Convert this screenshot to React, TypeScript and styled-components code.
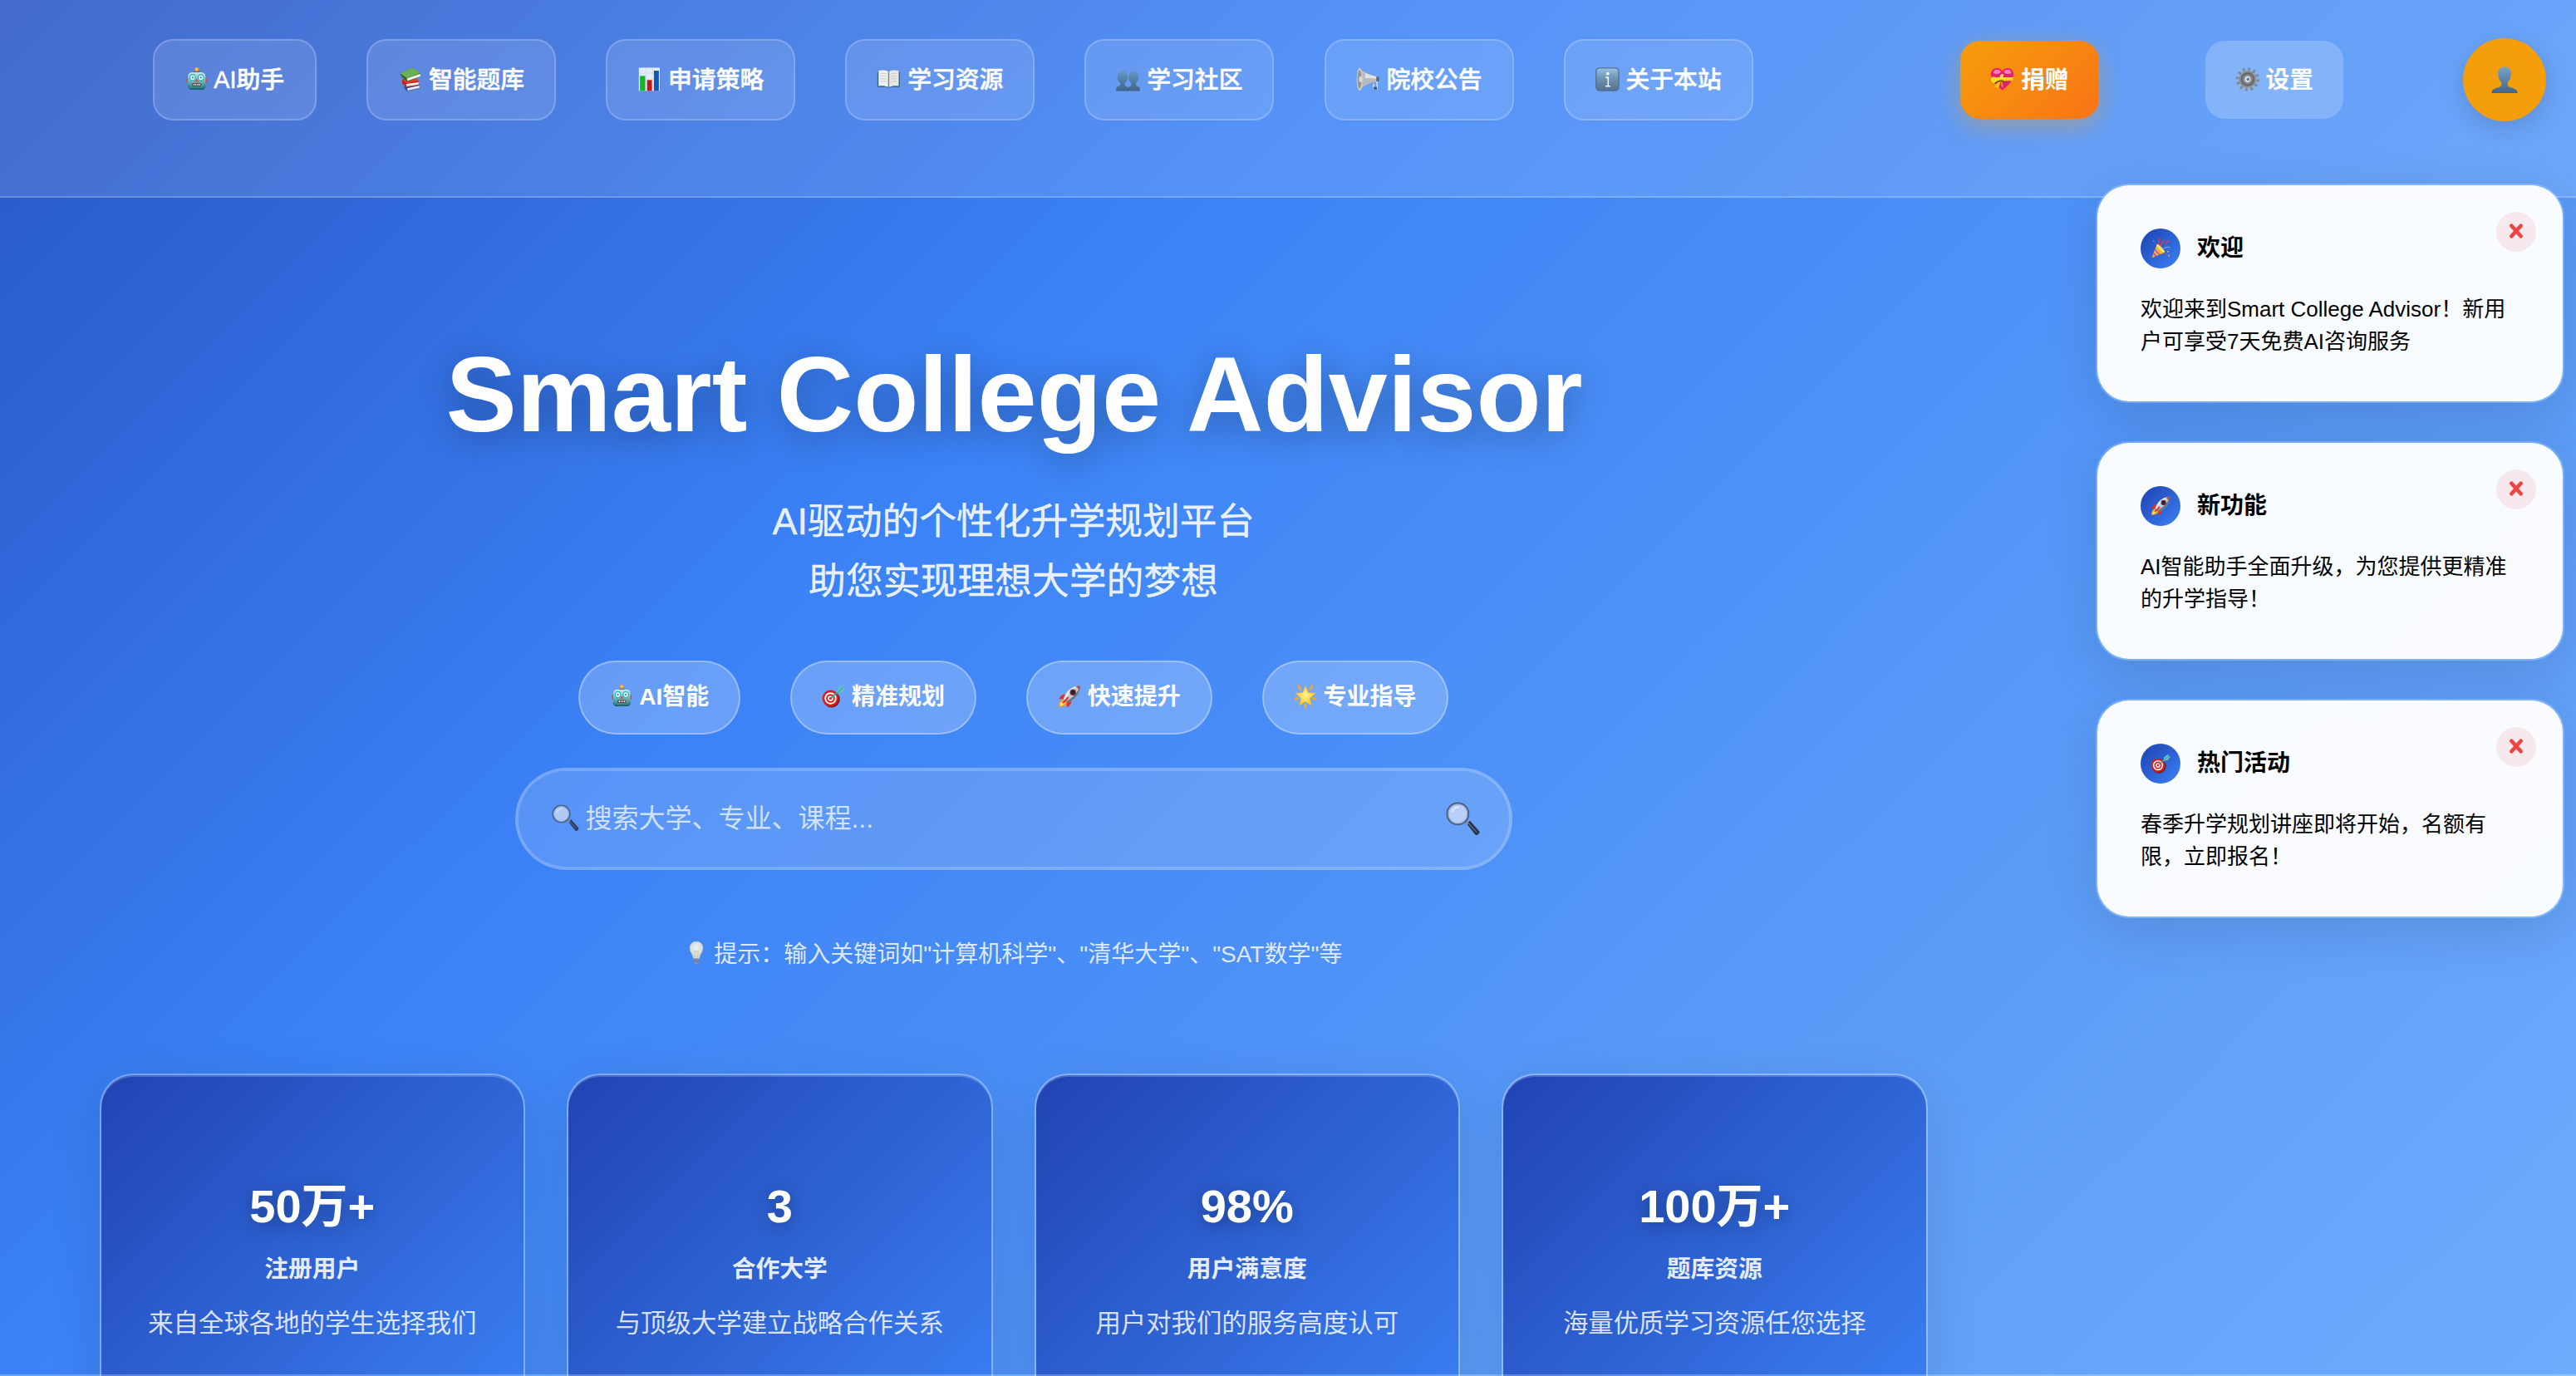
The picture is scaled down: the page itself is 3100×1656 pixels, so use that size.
import React from 'react';
import styled, { createGlobalStyle } from 'styled-components';

const GlobalStyle = createGlobalStyle`
  * { box-sizing: border-box; }
  body {
    margin: 0;
    font-family: "Liberation Sans", "Noto Sans CJK SC", sans-serif;
    color: #fff;
  }
`;

/* ---------- Emoji drawings ---------- */

const EmojiSvg = styled.svg`
  display: inline-block;
  width: 1em;
  height: 1em;
  vertical-align: -0.13em;
  overflow: visible;
`;

const drawings: Record<string, React.ReactNode> = {
  robot: (
    <g transform="translate(2.300 .4) scale(.88 .95)">
      <defs>
        <linearGradient id="robotHead" x1="0" y1="0" x2="0" y2="1">
          <stop offset="0" stopColor="#c4ebe4" />
          <stop offset=".5" stopColor="#74b5b4" />
          <stop offset="1" stopColor="#1f7379" />
        </linearGradient>
      </defs>
      <path d="M12.500 5h7l1.500 3h-10z" fill="#4f5380" />
      <circle cx="16" cy="2.600" r="3" fill="#f5a623" />
      <circle cx="15.400" cy="1.800" r="1.100" fill="#ffd97a" />
      <rect x=".6" y="14" width="30.800" height="7.500" rx="1.800" fill="#d8473b" />
      <rect x="2.600" y="6.500" width="26.800" height="24.500" rx="6" fill="url(#robotHead)" />
      <path d="M2.600 24c1 4.500 3 5.500 6 5.500h14.800c3 0 5-1 6-5.500v1c0 4-2.700 6-6 6H8.600c-3.300 0-6-2-6-6z" fill="#155a60" />
      <circle cx="9.800" cy="14" r="4.200" fill="#f4feff" stroke="#2fb3c9" strokeWidth="1.600" />
      <circle cx="22.200" cy="14" r="4.200" fill="#f4feff" stroke="#2fb3c9" strokeWidth="1.600" />
      <circle cx="9.800" cy="14" r="1.400" fill="#1e93b5" />
      <circle cx="22.200" cy="14" r="1.400" fill="#1e93b5" />
      <path d="M16 15.500l2.600 4.300h-5.200z" fill="#e0402f" />
      <rect x="9.500" y="21.800" width="13" height="4.200" rx="1.600" fill="#41302f" />
      <path d="M11 23.900h2M14 23.900h1.600M16.800 23.900h1.600M19.400 23.900h1.800" stroke="#fff" strokeWidth="2.200" />
    </g>
  ),
  books: (
    <>
      <path d="M8 26l4-3.500 14-1 3 2.500v4l-16.500 4L9 29.500z" fill="#3b4f9f" />
      <path d="M12.500 28l16-3.500.3 3-16 3.700z" fill="#eceef4" />
      <path d="M5.500 16.500l3.500-1 17.500 1.500 1.500 4.500-1 3-16 2.200-5.500-5.200z" fill="#c3231f" />
      <path d="M11 22.300l16.500-2.300v3l-16.300 2.500z" fill="#f0eeea" />
      <path d="M5.500 16.500l5.500 4.500 16.500-3-2-2.500z" fill="#dd3a30" />
      <path d="M3 8L19.500.500 30 7.500v5.300L12.500 19 5 13z" fill="#2f6a24" />
      <path d="M12 14.800l17.800-6.300.2 3.800L12.500 18z" fill="#f3f5f0" />
      <path d="M3 8L19.500.500 30 7.500l-18 7z" fill="#6cb254" />
    </>
  ),
  chart: (
    <>
      <rect x="2" y=".500" width="28" height="31" fill="#e3edf7" />
      <path d="M2 8h28M2 16h28M2 24h28M11 .500v31M21 .500v31" stroke="#c9d8e7" strokeWidth=".7" />
      <rect x="3.500" y="11.500" width="7" height="20" fill="#19b32b" />
      <rect x="13" y="17" width="6.500" height="14.500" fill="#c5161d" />
      <rect x="22.200" y="4.500" width="6.500" height="27" fill="#0f56b8" />
    </>
  ),
  openBook: (
    <>
      <path d="M1 6h30v20.500H18l-2 1.500-2-1.500H1z" fill="#2e6279" />
      <path d="M2.500 4.800c5-1.300 10-1 13.500 1.200v20.500c-4-2-9-2.200-13.500-1.500z" fill="#f2f2f0" />
      <path d="M29.500 4.800c-5-1.300-10-1-13.500 1.200v20.500c4-2 9-2.200 13.500-1.500z" fill="#e7e7e5" />
      <path d="M16 6v20.500" stroke="#7f8281" strokeWidth="1.600" />
      <path d="M5 8.500c3-.6 6-.4 8.500.6M5 12c3-.6 6-.4 8.500.6M5 15.500c3-.6 6-.4 8.500.6M5 19c3-.6 6-.4 8.500.6M27 8.500c-3-.6-6-.4-8.500.6M27 12c-3-.6-6-.4-8.500.6M27 15.500c-3-.6-6-.4-8.500.6M27 19c-3-.6-6-.4-8.500.6" stroke="#c2c4c5" strokeWidth="1" fill="none" />
    </>
  ),
  people: (
    <>
      <defs>
        <linearGradient id="people" gradientUnits="userSpaceOnUse" x1="0" y1="5" x2="0" y2="32">
          <stop offset="0" stopColor="#6498c2" />
          <stop offset="1" stopColor="#3f6389" />
        </linearGradient>
      </defs>
      <g fill="url(#people)">
        <ellipse cx="8.800" cy="13.300" rx="7" ry="8.300" />
        <ellipse cx="23.400" cy="13.300" rx="7" ry="8.300" />
        <path d="M5.500 19h6.500v5.500c1 1.500 4 1.300 4.100 3V31.800H.2V28.500c0-3 4.300-2.500 5.300-4.500z" />
        <path d="M20.200 19h6.500v5c1 2 5.300 1.500 5.300 4.500v3.300H16.100v-4.300c.1-1.700 3.100-1.500 4.100-3z" />
      </g>
      <path d="M16.100 27v4.800" stroke="#3b5c80" strokeWidth=".7" />
    </>
  ),
  megaphone: (
    <>
      <path d="M23 19l5-1v10.500l-4.500-.5v-6" fill="none" stroke="#dfe7f2" strokeWidth="1.600" />
      <path d="M23 26.500h5v3h-4z" fill="#4a5263" />
      <path d="M3 1C9 5 18 10 28 12.500v6.500C18 20.500 9 25.500 4 31z" fill="#b9babd" />
      <path d="M12 7.500c5 2.500 10 4.200 16 5v3c-6-1-11-1-16-1z" fill="#e4e4e5" />
      <path d="M27 12.500h2.700c1.500 2 1.500 4.500 0 6.500H27z" fill="#596172" />
      <ellipse cx="4.800" cy="16" rx="4" ry="15" fill="#d2d0cc" />
      <ellipse cx="4.600" cy="16" rx="2.700" ry="12.500" fill="#98948e" />
      <ellipse cx="5.800" cy="16" rx="2" ry="4" fill="#d9d8d5" />
    </>
  ),
  info: (
    <>
      <defs>
        <linearGradient id="info" x1="0" y1="0" x2="0" y2="1">
          <stop offset="0" stopColor="#9cc3e2" />
          <stop offset=".4" stopColor="#7298b8" />
          <stop offset="1" stopColor="#56718b" />
        </linearGradient>
      </defs>
      <rect x=".9" y=".900" width="30.200" height="30.200" rx="4.500" fill="url(#info)" stroke="#4c7192" strokeWidth="1.500" />
      <circle cx="16.500" cy="8.500" r="2" fill="#fff" />
      <path d="M13.500 13.500h3.500v11.500M13.500 25.200h6.500" stroke="#fff" strokeWidth="1.700" fill="none" />
    </>
  ),
  heart: (
    <>
      <path d="M16.500 31C11.500 26 1 19 1 9.500 1 4.200 4.500 1 9 1c3.300 0 6 1.800 7.300 4.400C17.600 2.800 20.200 1 23.500 1 28 1 31.300 4.200 31.300 9.500 31.300 19 21.500 26 16.500 31z" fill="#e3206f" />
      <path d="M4 7.500C4.500 4.500 6.500 3 9.200 3c2.600 0 4.300 1.300 5 3.300-2 2.700-8 3.400-10.200 1.200zM28.300 7.500C27.800 4.500 25.800 3 23.300 3c-2.500 0-4.200 1.300-4.900 3.300 2 2.700 7.700 3.400 9.900 1.200z" fill="#f77fb3" />
      <path d="M1.500 13.300h29.700l-1.400 4.700H2.800z" fill="#ffe02a" />
      <path d="M2.800 16.800h27" stroke="#e6b30e" strokeWidth="1" />
      <path d="M13.500 16.500C9.500 13 3 11.500 1.500 14.500c-1.500 3 .5 6 3 6.500 3 .3 6-2.500 9-4.500z" fill="#ffdc1f" />
      <path d="M13.500 16.500c-1.500-3.500 0-8 3-7.500 2.500.5 2 4-3 7.500z" fill="#ffe84a" />
      <path d="M13.500 16.500c3.500-1.500 7-.8 7 1.800s-4 2-7-1.800z" fill="#f7c516" />
      <path d="M13 18c-3 2-6.500 5.500-7.500 9l3.200-.8 1.300 2.500c2.500-3 3.500-7 3-10.700z" fill="#f6cc18" />
      <path d="M14 18c1.500 2 2.300 5 2.300 8.500" stroke="#d8a70e" strokeWidth="2" fill="none" />
      <path d="M6.500 21.300c3-2.800 5-3.600 8.500-3.400 2 .1 3.500 1 5 2.100" stroke="#5f3e0c" strokeWidth="1.200" fill="none" />
    </>
  ),
  gear: (
    <>
      <circle cx="16.500" cy="16" r="13.400" fill="none" stroke="#85888a" strokeWidth="4.800" strokeDasharray="3 4.016" />
      <circle cx="16.500" cy="16" r="10.500" fill="#6c6f71" stroke="#8f9293" strokeWidth="2.200" />
      <circle cx="16.500" cy="16" r="7.800" fill="#7f8284" stroke="#5f6264" strokeWidth="1.200" />
      <circle cx="16.500" cy="16" r="4.300" fill="#d9dde1" stroke="#a5a9ac" strokeWidth=".8" />
      <circle cx="17" cy="16" r="1.900" fill="#5577a8" />
    </>
  ),
  person: (
    <>
      <defs>
        <linearGradient id="person" x1="0" y1="0" x2="0" y2="1">
          <stop offset="0" stopColor="#76a5c8" />
          <stop offset="1" stopColor="#436488" />
        </linearGradient>
      </defs>
      <path d="M16 .500c5.500 0 8.500 3.800 8 9-.3 4.500-2 7.500-4.300 9.500v4c2 3.500 12 2 12 9H.300c0-7 10-5.500 12-9v-4C10 17 8.300 14 8 9.500c-.5-5.200 2.500-9 8-9z" fill="url(#person)" />
    </>
  ),
  party: (
    <>
      <path d="M2 31L10 9.500c4 1 11 8.500 12.500 13z" fill="#f3b92d" />
      <path d="M10 9.500c-2 2 9.500 14.500 12.500 13 2-2.500-9.500-14.500-12.500-13z" fill="#ffdf6e" />
      <path d="M7.500 16.500c1 4 4 7.500 8 9.500M4.800 23.500c1 2.200 3 4.200 5 5.200" stroke="#b347b8" strokeWidth="1.900" fill="none" />
      <path d="M14.500 9.500c-2-3-2-6 0-9M17 12c0-4 2-7 5-8.500M24 9c1.500-2 1.500-3.500 5-5.500" stroke="#e63a55" strokeWidth="1.900" fill="none" strokeLinecap="round" />
      <path d="M21 16.500c3.500-3 6-3.300 10-2" stroke="#62a8ea" strokeWidth="1.500" fill="none" />
      <circle cx="5" cy="4" r="1.300" fill="#4c8fe6" />
      <circle cx="28" cy="21" r="1.500" fill="#f0a32c" />
      <circle cx="8" cy="8" r="1.100" fill="#d84b7d" />
      <circle cx="29.500" cy="27.500" r="1.200" fill="#f0c04c" />
      <circle cx="25" cy="24.500" r="1.100" fill="#e24a3c" />
    </>
  ),
  rocket: (
    <>
      <path d="M1.500 30.500C1 26 3 21.500 7 20l5.500 5c-1.500 4-6.500 5.500-11 5.500z" fill="#f7a41c" />
      <path d="M3 29c0-3 1.500-5.500 4-6.500l2.500 2.300C8.500 27.500 6 29 3 29z" fill="#ffe56b" />
      <path d="M11.500 13.500c-5-.5-8 1.500-10 6l7 .5zM18.500 20.500c.5 5-1.500 8.500-6 10.500l-.5-7.500z" fill="#e13327" />
      <path d="M8 20c2-9 10-18.500 23-19C30.500 13.500 22 22 12.500 24.500z" fill="#c3cdd6" />
      <path d="M8 20C10 11 18 1.500 31 1 20 5.500 14 12.500 10 22z" fill="#e6ecf1" />
      <path d="M12.500 24.500C22 22 30.500 13.500 31 1c-4 10-9.500 16.500-20 22z" fill="#66757f" />
      <path d="M24.500 2.300C26.500 1.500 28.800 1.100 31 1c-.1 2.300-.5 4.400-1.200 6.300z" fill="#a8545a" />
      <circle cx="20.800" cy="10.600" r="4.200" fill="#7b2330" />
      <circle cx="20.800" cy="10.600" r="2.500" fill="#1e2738" />
      <path d="M7.500 24.500l6.500-6.500" stroke="#e13327" strokeWidth="2.600" strokeLinecap="round" />
    </>
  ),
  target: (
    <>
      <ellipse cx="13.300" cy="20" rx="11.500" ry="11.500" fill="#7e1515" />
      <circle cx="12" cy="18.800" r="11.300" fill="#d3201f" />
      <circle cx="12" cy="18.800" r="8.300" fill="#f8f3f1" />
      <circle cx="12" cy="18.800" r="6" fill="#cf201f" />
      <circle cx="12" cy="18.800" r="3.800" fill="#f8f3f1" />
      <circle cx="12" cy="18.800" r="1.800" fill="#cf201f" />
      <path d="M12.500 18.300L27 6" stroke="#3a9ca0" strokeWidth="2" />
      <path d="M20.500 11.500l1.500-6L28.500.500l.8 3.500 2.700.500-4.500 6z" fill="#5fc6c2" />
      <path d="M22 10.500L29 3.800" stroke="#2a8288" strokeWidth="1.100" />
    </>
  ),
  star: (
    <>
      <defs>
        <radialGradient id="star" cx=".5" cy=".45" r=".55">
          <stop offset="0" stopColor="#fff68d" />
          <stop offset="1" stopColor="#fdc51e" />
        </radialGradient>
      </defs>
      <path d="M6.500 1.500L9.500 7M25.500 1.500L22.500 7M2.500 20l4-1.500M29.500 20l-4-1.500M16 27.500V31" stroke="#f3a52c" strokeWidth="2.800" strokeLinecap="round" />
      <path d="M16 2l3.800 9 10.200.7-8 6.800 2.600 10L16 23.500 7.400 28.500l2.600-10L2 11.700 12.200 11z" fill="url(#star)" stroke="#f8b31c" strokeWidth=".7" strokeLinejoin="round" />
    </>
  ),
  search: (
    <>
      <path d="M20 21l3.200-2.800L31.500 27.500a2.400 2.400 0 0 1-3.700 3.500z" fill="#253049" />
      <path d="M22 20.800L29.800 29.500" stroke="#66728c" strokeWidth="1" />
      <path d="M18 18l3.400 3.600" stroke="#7f8ba3" strokeWidth="2.600" />
      <ellipse cx="11.500" cy="11.500" rx="10" ry="10" fill="#b9cff9" stroke="#4a5c80" strokeWidth="2.200" />
      <circle cx="11.500" cy="11.500" r="9.200" fill="none" stroke="#9fb2d6" strokeWidth=".9" />
      <path d="M6 9.500a6.500 6.500 0 0 1 6-4.300" stroke="#e0ebfd" strokeWidth="1.500" fill="none" strokeLinecap="round" />
    </>
  ),
  bulb: (
    <>
      <defs>
        <radialGradient id="bulb" cx=".5" cy=".4" r=".6">
          <stop offset="0" stopColor="#fffdf2" />
          <stop offset="1" stopColor="#d9dde0" />
        </radialGradient>
      </defs>
      <path d="M16 .300c5.500 0 9 3.800 9 9 0 5.500-4.500 7.500-5 14.200h-8c-.5-6.700-5-8.700-5-14.200 0-5.200 3.500-9 9-9z" fill="url(#bulb)" stroke="#d9cfa6" strokeWidth="1" />
      <path d="M14.300 22l-1-9 2.700 1.500 2.700-1.500-1 9" stroke="#e5c878" strokeWidth="1" fill="none" />
      <path d="M12.200 23.500h7.600l-.8 6.300-2 2h-2l-2-2z" fill="#8d99a8" />
      <path d="M12.500 25.500h7M12.800 28h6.400" stroke="#5f6b7c" strokeWidth="1" />
    </>
  ),
};

const Emoji = ({ name }: { name: string }) => (
  <EmojiSvg viewBox="0 0 32 32" aria-hidden="true">
    {drawings[name]}
  </EmojiSvg>
);

/* ---------- Page ---------- */

const Page = styled.div`
  position: relative;
  height: 1656px;
  overflow: hidden;
  background: linear-gradient(135deg, #2755c6 0%, #3b82f6 35%, #5c9df8 75%, #6dabfb 100%);
`;

const Header = styled.header`
  height: 238px;
  border-bottom: 2px solid rgba(255, 255, 255, 0.2);
  background: rgba(255, 255, 255, 0.13);
`;

const HeaderRow = styled.div`
  display: flex;
  align-items: center;
  justify-content: space-between;
  height: 192px;
  padding: 0 36px 0 184px;
`;

const Nav = styled.nav`
  display: flex;
  gap: 60.1px;
`;

const NavButton = styled.a`
  padding: 24px 36px;
  border: 2px solid rgba(255, 255, 255, 0.2);
  border-radius: 24px;
  background: rgba(255, 255, 255, 0.12);
  font-size: 28.8px;
  line-height: 46px;
  font-weight: 500;
  white-space: nowrap;
  -webkit-text-stroke: 0.5px #fff;

  &:first-child { padding-right: 37px; }
`;

const Actions = styled.div`
  display: flex;
  align-items: center;
`;

const ActionButton = styled.button<{ $primary?: boolean }>`
  margin: 0 ${(p) => (p.$primary ? 128 : 144)}px 0 0;
  padding: 24px 36px;
  border: 0;
  border-radius: 24px;
  background: ${(p) =>
    p.$primary ? 'linear-gradient(135deg, #f59e0b, #f97316)' : 'rgba(255, 255, 255, 0.2)'};
  box-shadow: ${(p) => (p.$primary ? '0 8px 30px rgba(245, 158, 11, 0.4)' : 'none')};
  color: #fff;
  font-family: inherit;
  font-size: 28.8px;
  line-height: 46px;
  font-weight: 600;
  white-space: nowrap;
`;

const Avatar = styled.div`
  display: flex;
  align-items: center;
  justify-content: center;
  width: 100px;
  height: 100px;
  border-radius: 50%;
  background: #f59e0b;
  box-shadow: 0 8px 30px rgba(0, 0, 0, 0.14);
  font-size: 32px;
`;

const Main = styled.main`
  display: flex;
  flex-direction: column;
  align-items: center;
  width: 2439px;
  padding: 160px 119px 0;
`;

const Title = styled.h1`
  margin: 0;
  padding-left: 2px;
  font-size: 128px;
  line-height: 154px;
  font-weight: 700;
  text-shadow: 0 8px 40px rgba(0, 0, 0, 0.3);
`;

const Subtitle = styled.p`
  margin: 40px 0 0;
  color: rgba(255, 255, 255, 0.9);
  font-size: 44.8px;
  line-height: 71.68px;
  text-align: center;
  -webkit-text-stroke: 0.4px rgba(255, 255, 255, 0.9);
`;

const Tags = styled.div`
  display: flex;
  gap: 60px;
  margin-top: 59.6px;
`;

const Tag = styled.span`
  padding: 20px 36px;
  border: 2px solid rgba(255, 255, 255, 0.3);
  border-radius: 50px;
  background: rgba(255, 255, 255, 0.23);
  font-size: 28px;
  line-height: 44.8px;
  font-weight: 600;
  white-space: nowrap;
`;

const SearchBox = styled.div`
  display: flex;
  align-items: center;
  justify-content: space-between;
  width: 1200px;
  height: 123px;
  margin-top: 40px;
  padding: 0 36px 0 40px;
  border: 4px solid rgba(255, 255, 255, 0.3);
  border-radius: 62px;
  background: rgba(255, 255, 255, 0.15) padding-box;
`;

const Placeholder = styled.span`
  color: rgba(255, 255, 255, 0.72);
  font-size: 32px;
  line-height: 52px;

  svg { opacity: 0.9; }
`;

const SearchButton = styled.span`
  display: flex;
  font-size: 40px;
`;

const Tip = styled.p`
  margin: 79px 0 0;
  color: rgba(255, 255, 255, 0.84);
  font-size: 28px;
  line-height: 45px;

  svg { opacity: 0.9; }
`;

const Stats = styled.section`
  display: grid;
  grid-template-columns: repeat(4, 1fr);
  gap: 50px;
  width: 2200px;
  margin-top: 121px;
`;

const StatCard = styled.article`
  display: flex;
  flex-direction: column;
  align-items: center;
  height: 440px;
  padding-top: 112px;
  border: 2px solid rgba(255, 255, 255, 0.3);
  border-radius: 40px;
  background: linear-gradient(135deg, #2143b2, #3b82f6) padding-box;
  box-shadow: 0 16px 64px rgba(0, 0, 0, 0.11), inset 0 2px 0 rgba(255, 255, 255, 0.2);
`;

const StatNumber = styled.div`
  font-size: 56px;
  line-height: 92px;
  font-weight: 700;
  text-shadow: 0 4px 20px rgba(0, 0, 0, 0.3);
`;

const StatLabel = styled.div`
  margin-top: 6px;
  color: rgba(255, 255, 255, 0.9);
  font-size: 28.8px;
  line-height: 46px;
  font-weight: 600;
`;

const StatText = styled.div`
  margin-top: 18px;
  color: rgba(255, 255, 255, 0.84);
  font-size: 30.4px;
  line-height: 48.6px;
`;

const Notices = styled.aside`
  position: absolute;
  top: 221px;
  right: 14px;
  display: flex;
  flex-direction: column;
  gap: 46px;
  width: 564px;
`;

const Notice = styled.article`
  position: relative;
  height: 264px;
  padding: 52px;
  border: 2px solid rgba(255, 255, 255, 0.2);
  border-radius: 40px;
  background: rgba(255, 255, 255, 0.96) padding-box;
  box-shadow: 0 16px 64px rgba(0, 0, 0, 0.12);
  color: #000;
`;

const NoticeHead = styled.div`
  display: flex;
  align-items: center;
  gap: 20px;
  height: 48px;
`;

const NoticeIcon = styled.span`
  display: flex;
  align-items: center;
  justify-content: center;
  width: 48px;
  height: 48px;
  border-radius: 50%;
  background: linear-gradient(135deg, #1e40af, #3b82f6);
  font-size: 24px;
`;

const NoticeTitle = styled.h3`
  margin: 0;
  font-size: 28px;
  line-height: 44px;
  font-weight: 600;
`;

const NoticeText = styled.p`
  margin: 30px 0 0;
  font-size: 26px;
  line-height: 39px;
`;

const CloseButton = styled.span`
  position: absolute;
  top: 32px;
  right: 32px;
  display: flex;
  align-items: center;
  justify-content: center;
  width: 48px;
  height: 48px;
  padding-bottom: 2px;
  border-radius: 50%;
  background: rgba(239, 68, 68, 0.1);
`;

const BottomEdge = styled.div`
  position: absolute;
  right: 0;
  bottom: 0;
  left: 0;
  height: 2px;
  background: rgba(255, 255, 255, 0.25);
`;

const navItems = [
  ['robot', 'AI助手'],
  ['books', '智能题库'],
  ['chart', '申请策略'],
  ['openBook', '学习资源'],
  ['people', '学习社区'],
  ['megaphone', '院校公告'],
  ['info', '关于本站'],
];

const tags = [
  ['robot', 'AI智能'],
  ['target', '精准规划'],
  ['rocket', '快速提升'],
  ['star', '专业指导'],
];

const stats = [
  ['50万+', '注册用户', '来自全球各地的学生选择我们'],
  ['3', '合作大学', '与顶级大学建立战略合作关系'],
  ['98%', '用户满意度', '用户对我们的服务高度认可'],
  ['100万+', '题库资源', '海量优质学习资源任您选择'],
];

const notices = [
  ['party', '欢迎', '欢迎来到Smart College Advisor！新用户可享受7天免费AI咨询服务'],
  ['rocket', '新功能', 'AI智能助手全面升级，为您提供更精准的升学指导！'],
  ['target', '热门活动', '春季升学规划讲座即将开始，名额有限，立即报名！'],
];

export default function App() {
  return (
    <>
      <GlobalStyle />
      <Page lang="zh-CN">
        <Header>
          <HeaderRow>
            <Nav>
              {navItems.map(([icon, label]) => (
                <NavButton key={label}>
                  <Emoji name={icon} /> {label}
                </NavButton>
              ))}
            </Nav>
            <Actions>
              <ActionButton $primary>
                <Emoji name="heart" /> 捐赠
              </ActionButton>
              <ActionButton>
                <Emoji name="gear" /> 设置
              </ActionButton>
              <Avatar>
                <Emoji name="person" />
              </Avatar>
            </Actions>
          </HeaderRow>
        </Header>

        <Main>
          <Title>Smart College Advisor</Title>
          <Subtitle>
            AI驱动的个性化升学规划平台
            <br />
            助您实现理想大学的梦想
          </Subtitle>
          <Tags>
            {tags.map(([icon, label]) => (
              <Tag key={label}>
                <Emoji name={icon} /> {label}
              </Tag>
            ))}
          </Tags>
          <SearchBox>
            <Placeholder>
              <Emoji name="search" /> 搜索大学、专业、课程...
            </Placeholder>
            <SearchButton>
              <Emoji name="search" />
            </SearchButton>
          </SearchBox>
          <Tip>
            <Emoji name="bulb" /> 提示：输入关键词如"计算机科学"、"清华大学"、"SAT数学"等
          </Tip>
          <Stats>
            {stats.map(([value, label, text]) => (
              <StatCard key={label}>
                <StatNumber>{value}</StatNumber>
                <StatLabel>{label}</StatLabel>
                <StatText>{text}</StatText>
              </StatCard>
            ))}
          </Stats>
        </Main>

        <Notices>
          {notices.map(([icon, title, text]) => (
            <Notice key={title}>
              <NoticeHead>
                <NoticeIcon>
                  <Emoji name={icon} />
                </NoticeIcon>
                <NoticeTitle>{title}</NoticeTitle>
              </NoticeHead>
              <NoticeText>{text}</NoticeText>
              <CloseButton>
                <svg width="18" height="18" viewBox="0 0 18 18">
                  <path d="M3.400 2.800l11.200 12.400M14.600 2.800l-11.200 12.400" stroke="#ef4444" strokeWidth="4.600" strokeLinecap="round" />
                </svg>
              </CloseButton>
            </Notice>
          ))}
        </Notices>
        <BottomEdge />
      </Page>
    </>
  );
}
